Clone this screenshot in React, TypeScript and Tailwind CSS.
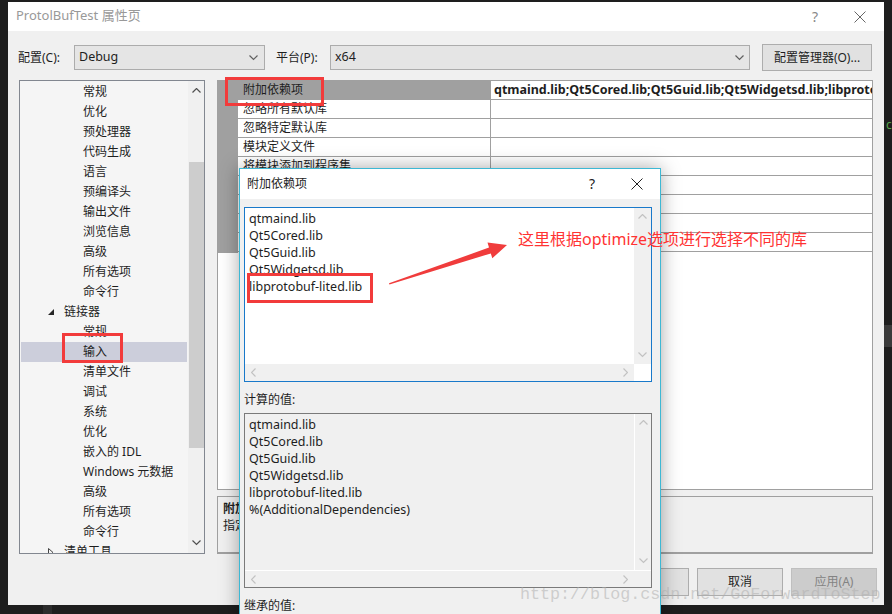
import React from "react";

const ChevDown = ({ c = "#606060", w = 9 }: { c?: string; w?: number }) => (
  <svg width={w} height={Math.ceil(w / 2) + 1} viewBox={`0 0 ${w} ${Math.ceil(w / 2) + 1}`}>
    <polyline points={`0.5,0.5 ${w / 2},${w / 2} ${w - 0.5},0.5`} stroke={c} strokeWidth="1.2" fill="none" />
  </svg>
);
const ChevUp = ({ c = "#606060", w = 9 }: { c?: string; w?: number }) => (
  <svg width={w} height={Math.ceil(w / 2) + 1} viewBox={`0 0 ${w} ${Math.ceil(w / 2) + 1}`}>
    <polyline points={`0.5,${w / 2} ${w / 2},0.5 ${w - 0.5},${w / 2}`} stroke={c} strokeWidth="1.2" fill="none" />
  </svg>
);
const ChevLeft = ({ c = "#c2c2c2" }: { c?: string }) => (
  <svg width="5" height="9" viewBox="0 0 5 9">
    <polyline points="4.5,0.5 0.5,4.5 4.5,8.5" stroke={c} strokeWidth="1.2" fill="none" />
  </svg>
);
const ChevRight = ({ c = "#c2c2c2" }: { c?: string }) => (
  <svg width="5" height="9" viewBox="0 0 5 9">
    <polyline points="0.5,0.5 4.5,4.5 0.5,8.5" stroke={c} strokeWidth="1.2" fill="none" />
  </svg>
);
const CloseX = ({ s = 11, c = "#333" }: { s?: number; c?: string }) => (
  <svg width={s} height={s} viewBox={`0 0 ${s} ${s}`}>
    <path d={`M0.5 0.5L${s - 0.5} ${s - 0.5}M${s - 0.5} 0.5L0.5 ${s - 0.5}`} stroke={c} strokeWidth="1" />
  </svg>
);

type TreeItem = { t: string; lvl: 1 | 2; sel?: boolean; open?: boolean; closed?: boolean };
const tree: TreeItem[] = [
  { t: "常规", lvl: 2 },
  { t: "优化", lvl: 2 },
  { t: "预处理器", lvl: 2 },
  { t: "代码生成", lvl: 2 },
  { t: "语言", lvl: 2 },
  { t: "预编译头", lvl: 2 },
  { t: "输出文件", lvl: 2 },
  { t: "浏览信息", lvl: 2 },
  { t: "高级", lvl: 2 },
  { t: "所有选项", lvl: 2 },
  { t: "命令行", lvl: 2 },
  { t: "链接器", lvl: 1, open: true },
  { t: "常规", lvl: 2 },
  { t: "输入", lvl: 2, sel: true },
  { t: "清单文件", lvl: 2 },
  { t: "调试", lvl: 2 },
  { t: "系统", lvl: 2 },
  { t: "优化", lvl: 2 },
  { t: "嵌入的 IDL", lvl: 2 },
  { t: "Windows 元数据", lvl: 2 },
  { t: "高级", lvl: 2 },
  { t: "所有选项", lvl: 2 },
  { t: "命令行", lvl: 2 },
  { t: "清单工具", lvl: 1, closed: true },
];

const gridRows = [
  "附加依赖项",
  "忽略所有默认库",
  "忽略特定默认库",
  "模块定义文件",
  "将模块添加到程序集",
  "嵌入托管资源文件",
  "强制符号引用",
  "延迟加载的 DLL",
  "程序集链接资源",
];

const libs = ["qtmaind.lib", "Qt5Cored.lib", "Qt5Guid.lib", "Qt5Widgetsd.lib", "libprotobuf-lited.lib"];

export default function App() {
  return (
    <div className="relative w-[892px] h-[614px] overflow-hidden bg-[#1e1e1e] font-['Noto_Sans','Noto_Sans_CJK_SC',sans-serif] text-[12px] text-[#1e1e1e] leading-none">
      {/* main dialog */}
      <div className="ml-[8px] mt-[2px] w-[876px] h-[603px] flex flex-col bg-[#f0f0f0]">
        {/* title bar */}
        <div className="h-[29px] shrink-0 bg-white flex items-center pl-[8px] pr-[12px]">
          <span className="text-[13px] text-[#999999] -mt-[2px]">ProtolBufTest 属性页</span>
          <div className="ml-auto flex items-center">
            <span className="w-[24px] text-center text-[14px] text-[#888888]">?</span>
            <span className="ml-[21px] w-[24px] flex justify-center">
              <CloseX s={12} c="#666666" />
            </span>
          </div>
        </div>

        {/* config row */}
        <div className="mt-[13px] h-[27px] shrink-0 flex items-center pl-[10px]">
          <span className="w-[56px] mt-[1px]">配置(C):</span>
          <div className="w-[191px] h-[25px] bg-[#e5e5e5] border border-[#acacac] flex items-center pl-[4px] pr-[6px]">
            <span className="text-[12.5px]">Debug</span>
            <span className="ml-auto">
              <ChevDown />
            </span>
          </div>
          <span className="ml-[11px] w-[54px] mt-[1px]">平台(P):</span>
          <div className="w-[420px] h-[25px] bg-[#e5e5e5] border border-[#acacac] flex items-center pl-[4px] pr-[5px]">
            <span className="text-[12.5px]">x64</span>
            <span className="ml-auto">
              <ChevDown />
            </span>
          </div>
          <div className="ml-[12px] w-[110px] h-[27px] bg-[#e1e1e1] border border-[#adadad] flex items-center justify-center">
            配置管理器(O)...
          </div>
        </div>

        {/* main area */}
        <div className="mt-[9px] flex pl-[11px] gap-[12px]">
          {/* tree */}
          <div className="w-[186px] h-[474px] shrink-0 border border-[#828790] bg-[#f5f5f5] flex overflow-hidden">
            <div className="flex-1 min-w-0 px-[1px] pt-[1px] overflow-hidden">
              {tree.map((it, i) => (
                <div
                  key={i}
                  className={`h-[20px] shrink-0 flex items-center ${it.sel ? "bg-[#cccedb]" : ""} ${
                    it.lvl === 2 ? "pl-[62px]" : "pl-[27px]"
                  }`}
                >
                  {it.open && (
                    <svg width="6" height="6" viewBox="0 0 6 6" className="mr-[10px]">
                      <polygon points="6,0 6,6 0,6" fill="#262626" />
                    </svg>
                  )}
                  {it.closed && (
                    <svg width="6" height="9" viewBox="0 0 6 9" className="mr-[10px]">
                      <polygon points="0.5,0.5 5,4.5 0.5,8.5" fill="none" stroke="#444" strokeWidth="1" />
                    </svg>
                  )}
                  <span className="whitespace-nowrap">{it.t}</span>
                </div>
              ))}
            </div>
            <div className="w-[16px] shrink-0 bg-[#f0f0f0] flex flex-col items-center">
              <div className="h-[20px] flex items-center">
                <ChevUp c="#505050" />
              </div>
              <div className="h-[61px]" />
              <div className="w-[15px] h-[286px] bg-[#cdcdcd]" />
              <div className="flex-1" />
              <div className="h-[20px] flex items-center">
                <ChevDown c="#505050" />
              </div>
            </div>
          </div>

          {/* right column */}
          <div className="w-[656px] shrink-0 flex flex-col gap-[6px]">
            <div className="h-[410px] border border-[#a0a0a0] bg-white overflow-hidden">
              <div className="flex">
                <div className="w-[20px] shrink-0 h-[172px] bg-[#a0a0a0]" />
                <div className="flex-1 min-w-0 flex flex-col">
                  {gridRows.map((r, i) => (
                    <div key={i} className="h-[19px] flex border-b border-[#a0a0a0]">
                      <div
                        className={`w-[253px] shrink-0 flex items-center pl-[5px] border-r border-[#a0a0a0] ${
                          i === 0 ? "bg-[#a0a0a0]" : ""
                        }`}
                      >
                        <span className="whitespace-nowrap">{r}</span>
                      </div>
                      <div className="flex-1 min-w-0 flex items-center pl-[3px] overflow-hidden">
                        {i === 0 && (
                          <span className="font-bold whitespace-nowrap text-[12.5px]">
                            qtmaind.lib;Qt5Cored.lib;Qt5Guid.lib;Qt5Widgetsd.lib;libprotobuf-lited.lib;%(AdditionalDependencies)
                          </span>
                        )}
                      </div>
                    </div>
                  ))}
                </div>
              </div>
            </div>
            <div className="h-[58px] border border-[#a0a0a0] border-b-2 bg-[#f0f0f0] px-[5px] pt-[6px] flex flex-col gap-[5px] overflow-hidden">
              <span className="font-bold">附加依赖项</span>
              <span className="whitespace-nowrap">指定要添加到链接命令行的附加项。[例如 kernel32.lib]</span>
            </div>
          </div>
        </div>

        {/* bottom buttons */}
        <div className="mt-[14px] h-[28px] flex justify-end pr-[7px] gap-[8px]">
          <div className="w-[86px] h-[28px] bg-[#e1e1e1] border border-[#adadad] flex items-center justify-center">确定</div>
          <div className="w-[86px] h-[28px] bg-[#e1e1e1] border border-[#adadad] flex items-center justify-center">取消</div>
          <div className="w-[86px] h-[28px] bg-[#cccccc] border border-[#bfbfbf] text-[#838383] flex items-center justify-center">
            应用(A)
          </div>
        </div>
      </div>

      {/* desktop bits on right */}
      <div className="absolute left-[886px] top-[119px] text-[12px] text-[#57a64a]">c</div>
      <div className="absolute left-[884px] top-[325px] w-[8px] h-[22px] bg-[#3a3a3a]" />
      <div className="absolute left-[43px] top-[605px] w-[9px] h-[9px] bg-[#2c2c2c]" />

      {/* inner dialog */}
      <div className="absolute left-[239px] top-[168px] w-[422px] h-[452px] border border-[#3db8d4] bg-[#f0f0f0] shadow-[0_0_18px_rgba(0,0,0,0.35)] flex flex-col">
        <div className="h-[30px] shrink-0 bg-white flex items-center pl-[7px] pr-[11px]">
          <span>附加依赖项</span>
          <div className="ml-auto flex items-center">
            <span className="w-[24px] text-center text-[14px] text-[#222]">?</span>
            <span className="ml-[21px] w-[24px] flex justify-center">
              <CloseX s={12} c="#222" />
            </span>
          </div>
        </div>
        <div className="px-[4px] flex flex-col">
          {/* edit box */}
          <div className="mt-[8px] w-[408px] h-[175px] border border-[#1979ca] bg-white flex flex-col">
            <div className="flex-1 flex">
              <div className="flex-1 pl-[4px] pt-[2px] text-[12.5px] leading-[17px]">
                {libs.map((l) => (
                  <div key={l}>{l}</div>
                ))}
              </div>
              <div className="w-[17px] bg-[#f0f0f0] flex flex-col items-center justify-between py-[6px]">
                <ChevUp c="#c2c2c2" />
                <ChevDown c="#c2c2c2" />
              </div>
            </div>
            <div className="h-[17px] flex">
              <div className="flex-1 bg-[#f0f0f0] flex items-center justify-between px-[6px]">
                <ChevLeft />
                <ChevRight />
              </div>
              <div className="w-[17px] bg-white" />
            </div>
          </div>
          <div className="mt-[9px] h-[17px] flex items-center">计算的值:</div>
          <div className="mt-[5px] w-[408px] h-[175px] border border-[#7a7a7a] bg-[#f0f0f0] flex flex-col">
            <div className="flex-1 flex">
              <div className="flex-1 pl-[4px] pt-[2px] text-[12.5px] leading-[17px]">
                {[...libs, "%(AdditionalDependencies)"].map((l) => (
                  <div key={l}>{l}</div>
                ))}
              </div>
              <div className="w-[17px] border-l border-white flex flex-col items-center justify-between py-[6px]">
                <ChevUp c="#c2c2c2" />
                <ChevDown c="#c2c2c2" />
              </div>
            </div>
            <div className="h-[17px] flex border-t border-white">
              <div className="flex-1 flex items-center justify-between px-[6px]">
                <ChevLeft />
                <ChevRight />
              </div>
              <div className="w-[17px]" />
            </div>
          </div>
          <div className="mt-[9px] h-[17px] flex items-center">继承的值:</div>
        </div>
      </div>

      {/* annotations */}
      <div className="absolute left-[62px] top-[333px] w-[61px] h-[30px] border-[3px] border-[#f23b3b]" />
      <div className="absolute left-[225px] top-[77px] w-[99px] h-[29px] border-[3px] border-[#f23b3b]" />
      <div className="absolute left-[247px] top-[273px] w-[126px] h-[30px] border-[3px] border-[#f23b3b]" />
      <svg className="absolute left-0 top-0 pointer-events-none" width="892" height="614" viewBox="0 0 892 614">
        <polygon
          points="389,283.3 489,247.6 487.5,242.6 507,245 492.3,258.3 490.8,253.4 389.4,284.6"
          fill="#f03c3c"
        />
      </svg>
      <div className="absolute left-[518px] top-[229px] text-[16px] leading-[20px] text-[#ff3333] whitespace-nowrap">
        这里根据optimize选项进行选择不同的库
      </div>

      {/* watermark */}
      <div className="absolute left-[520px] top-[585px] font-['Liberation_Mono',monospace] text-[16.7px] leading-[20px] text-[rgba(175,175,175,0.55)] whitespace-nowrap">
        http://blog.csdn.net/GoForwardToStep
      </div>
    </div>
  );
}
